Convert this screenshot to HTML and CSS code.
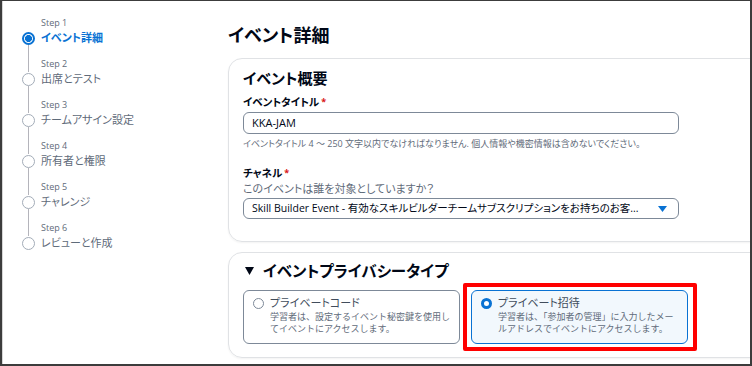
FILE: index.html
```html
<!DOCTYPE html>
<html lang="ja">
<head>
  <meta charset="UTF-8">
  <meta name="viewport" content="width=device-width, initial-scale=1.0">
  <title>イベント詳細</title>
  <link rel="stylesheet" href="styles.css">
</head>
<body>
  <div class="frame">
    <div class="page">

      <!-- ステップ一覧 -->
      <nav class="steps">
        <ol>
          <li class="step active">
            <span class="dot"></span>
            <span class="step-no">Step 1</span>
            <span class="step-name">イベント詳細</span>
          </li>
          <li class="step">
            <span class="dot"></span>
            <span class="step-no">Step 2</span>
            <span class="step-name">出席とテスト</span>
          </li>
          <li class="step">
            <span class="dot"></span>
            <span class="step-no">Step 3</span>
            <span class="step-name">チームアサイン設定</span>
          </li>
          <li class="step">
            <span class="dot"></span>
            <span class="step-no">Step 4</span>
            <span class="step-name">所有者と権限</span>
          </li>
          <li class="step">
            <span class="dot"></span>
            <span class="step-no">Step 5</span>
            <span class="step-name">チャレンジ</span>
          </li>
          <li class="step last">
            <span class="dot"></span>
            <span class="step-no">Step 6</span>
            <span class="step-name">レビューと作成</span>
          </li>
        </ol>
      </nav>

      <main class="main">
        <h1>イベント詳細</h1>

        <!-- イベント概要 -->
        <section class="card">
          <h2>イベント概要</h2>

          <div class="field">
            <label class="label">イベントタイトル<span class="req">*</span></label>
            <div class="input">KKA-JAM</div>
            <div class="hint">イベントタイトル 4 ～ 250 文字以内でなければなりません. 個人情報や機密情報は含めないでください。</div>
          </div>

          <div class="field channel">
            <label class="label">チャネル<span class="req">*</span></label>
            <div class="desc">このイベントは誰を対象としていますか？</div>
            <div class="input select">
              <span class="select-text">Skill Builder Event - 有効なスキルビルダーチームサブスクリプションをお持ちのお客...</span>
              <svg class="caret" width="9" height="6" viewBox="0 0 9 6"><path d="M0 0h9L4.5 6z" fill="#0972d3"/></svg>
            </div>
          </div>
        </section>

        <!-- プライバシータイプ -->
        <section class="card privacy">
          <h2>
            <svg class="toggle" width="9" height="8" viewBox="0 0 9 8"><path d="M0 0h9L4.5 8z" fill="#000716"/></svg>
            イベントプライバシータイプ
          </h2>
          <div class="tiles">
            <div class="tile">
              <span class="radio"></span>
              <div>
                <div class="tile-title">プライベートコード</div>
                <div class="tile-desc">学習者は、設定するイベント秘密鍵を使用し<br>てイベントにアクセスします。</div>
              </div>
            </div>
            <div class="tile selected">
              <span class="radio"></span>
              <div>
                <div class="tile-title">プライベート招待</div>
                <div class="tile-desc">学習者は、「参加者の管理」に入力したメー<br>ルアドレスでイベントにアクセスします。</div>
              </div>
            </div>
          </div>
        </section>
      </main>

    </div>
  </div>
</body>
</html>
```

FILE: styles.css
```css
* {
  box-sizing: border-box;
  margin: 0;
  padding: 0;
}
body {
  font-family: "Open Sans", "Noto Sans CJK JP", sans-serif;
  font-feature-settings: "palt";
  color: #000716;
  background: #fff;
}
.frame {
  width: 752px;
  height: 366px;
  overflow: hidden;
  border: 2px solid #3c3c3c;
  border-top-width: 1px;
}
.page {
  display: flex;
  height: 100%;
  border-left: 1px solid #d6d6d6;
}

/* ステップ */
.steps {
  width: 225px;
  flex-shrink: 0;
  padding: 15px 0 0 19px;
}
.steps ol {
  list-style: none;
}
.step {
  position: relative;
  display: grid;
  grid-template-columns: 13px 1fr;
  grid-template-rows: 14px 16px;
  column-gap: 6px;
  margin-bottom: 11px;
}
.step::after {
  content: "";
  position: absolute;
  left: 6px;
  top: 29px;
  width: 1px;
  height: 27px;
  background: #b4b4bb;
}
.step.last::after {
  display: none;
}
.dot {
  grid-column: 1;
  grid-row: 2;
  align-self: center;
  width: 13px;
  height: 13px;
  border: 1.5px solid #a3acb8;
  border-radius: 50%;
  background: #fff;
}
.step-no {
  grid-column: 2;
  grid-row: 1;
  font-size: 9px;
  line-height: 14px;
  color: #5f6b7a;
}
.step-name {
  grid-column: 2;
  grid-row: 2;
  font-size: 11px;
  line-height: 16px;
  color: #5f6b7a;
}
.step.active .dot {
  border: 2px solid #0972d3;
  background: radial-gradient(circle, #0972d3 0 3.2px, #fff 3.8px);
}
.step.active .step-name {
  color: #0972d3;
  font-weight: 700;
}

/* メイン */
.main {
  width: 540px;
  flex-shrink: 0;
  padding-top: 22px;
}
h1 {
  font-size: 18px;
  line-height: 24px;
  font-weight: 700;
  margin-bottom: 11px;
}
.card {
  border: 1px solid #e0e2e5;
  border-radius: 14px;
  padding: 9px 14px 22px;
  box-shadow: 0 1px 2px rgba(0, 7, 22, 0.05);
}
h2 {
  font-size: 15px;
  line-height: 20px;
  font-weight: 700;
  margin-bottom: 6px;
}
.label {
  display: block;
  font-size: 10.5px;
  line-height: 16px;
  font-weight: 700;
  margin-bottom: 2px;
}
.req {
  color: #d91515;
  font-size: 9px;
  margin-left: 2px;
  vertical-align: top;
}
.input {
  width: 436px;
  height: 22px;
  border: 1px solid #7d8998;
  border-radius: 6px;
  padding: 0 8px;
  font-size: 11px;
  line-height: 20px;
}
.hint {
  font-size: 9px;
  line-height: 14px;
  color: #5f6b7a;
  margin-top: 3px;
}
.channel {
  margin-top: 14px;
}
.channel .label {
  margin-bottom: 0;
}
.desc {
  font-size: 11px;
  line-height: 16px;
  color: #5f6b7a;
  margin-bottom: 1px;
}
.select {
  height: 21px;
  display: flex;
  align-items: center;
  justify-content: space-between;
  gap: 12px;
  padding-right: 11px;
  font-size: 10.5px;
  line-height: 19px;
}
.select-text {
  white-space: nowrap;
  overflow: hidden;
}
.caret {
  display: block;
  flex-shrink: 0;
}

/* プライバシータイプ */
.privacy {
  margin-top: 10px;
  padding: 8px 14px 13px;
}
.privacy h2 {
  display: flex;
  align-items: center;
  gap: 9px;
  font-size: 15.5px;
  margin-bottom: 9px;
  padding-left: 2px;
}
.toggle {
  display: block;
}
.tiles {
  display: flex;
  gap: 11px;
}
.tile {
  position: relative;
  width: 217px;
  display: grid;
  grid-template-columns: 11px 1fr;
  column-gap: 6px;
  border: 1px solid #7d8998;
  border-radius: 6px;
  padding: 4px 6px 8px 9px;
}
.tile.selected {
  border-color: #0972d3;
  background: #f2f8fd;
}
.tile.selected::after {
  content: "";
  position: absolute;
  top: -8px;
  left: -9px;
  right: -10px;
  bottom: -8px;
  border: 4px solid #ff0000;
  border-radius: 2px;
}
.radio {
  margin-top: 2.5px;
  width: 11px;
  height: 11px;
  border: 1.5px solid #7d8998;
  border-radius: 50%;
  background: #fff;
}
.tile.selected .radio {
  border: 3.5px solid #0972d3;
}
.tile-title {
  font-size: 11px;
  line-height: 16px;
  color: #414d5c;
}
.tile-desc {
  font-size: 9px;
  line-height: 12px;
  color: #5f6b7a;
  white-space: nowrap;
  font-feature-settings: normal;
}
```
